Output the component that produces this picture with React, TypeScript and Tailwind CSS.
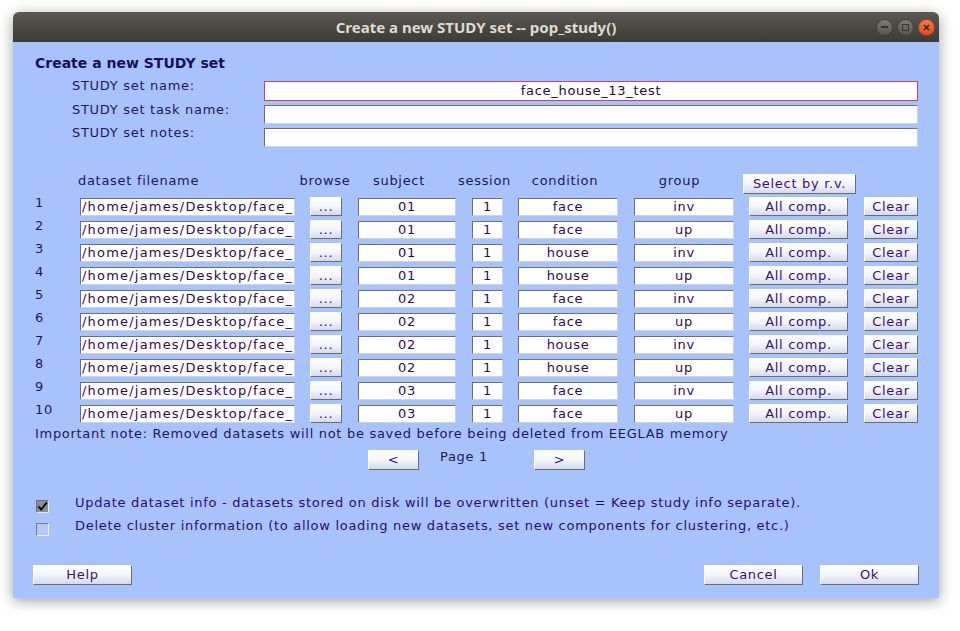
import React from 'react';

const rows = [
  { subject: '01', condition: 'face', group: 'inv' },
  { subject: '01', condition: 'face', group: 'up' },
  { subject: '01', condition: 'house', group: 'inv' },
  { subject: '01', condition: 'house', group: 'up' },
  { subject: '02', condition: 'face', group: 'inv' },
  { subject: '02', condition: 'face', group: 'up' },
  { subject: '02', condition: 'house', group: 'inv' },
  { subject: '02', condition: 'house', group: 'up' },
  { subject: '03', condition: 'face', group: 'inv' },
  { subject: '03', condition: 'face', group: 'up' },
];

// sunken text field look
const field =
  'bg-white border border-t-[#6f6f6f] border-l-[#6f6f6f] border-b-[#cdd2dc] border-r-[#cdd2dc] text-[#33094f] leading-[15px] whitespace-nowrap flex items-center';

// raised gradient button look
const btn =
  'bg-linear-to-b from-white via-[#f3f5fb] to-[#d3dae9] border border-t-white border-l-white border-b-[#6c6c74] border-r-[#6c6c74] text-[#3a0c88] flex items-center justify-center leading-[15px]';

const Button: React.FC<{ label: string; className: string }> = ({ label, className }) => (
  <div className={`${btn} ${className}`}>{label}</div>
);

const WindowButtons: React.FC = () => (
  <div className="flex items-center gap-[4px] pr-[4px]">
    <div className="w-[17px] h-[17px] rounded-full bg-linear-to-b from-[#7d7b76] to-[#57554f] border border-[#3f3e3a] flex items-center justify-center">
      <div className="w-[7px] h-[2px] bg-[#35342f]" />
    </div>
    <div className="w-[17px] h-[17px] rounded-full bg-linear-to-b from-[#7d7b76] to-[#57554f] border border-[#3f3e3a] flex items-center justify-center">
      <div className="w-[7px] h-[7px] border-[1.5px] border-[#35342f]" />
    </div>
    <div className="w-[17px] h-[17px] rounded-full bg-linear-to-b from-[#f37a4c] to-[#df4d1c] border border-[#a8401c] flex items-center justify-center">
      <svg width="7" height="7" viewBox="0 0 7 7">
        <path d="M1 1L6 6M6 1L1 6" stroke="#3a1a10" strokeWidth="1.4" />
      </svg>
    </div>
  </div>
);

export default function App() {
  return (
    <div className="w-[960px] h-[631px] bg-white pt-[12px] pl-[13px] font-['DejaVu_Sans',sans-serif] text-[13px] text-[#1f1468]">
      <div className="w-[926px] rounded-t-[6px] overflow-hidden shadow-[0_3px_14px_rgba(0,0,0,0.38)]">
        {/* title bar */}
        <div className="h-[30px] grid grid-cols-[1fr_auto_1fr] items-center bg-linear-to-b from-[#5b5852] to-[#3c3b37]">
          <div />
          <div className="font-['Noto_Sans',sans-serif] font-bold text-[15px] text-[#dfdbd2]">
            Create a new STUDY set -- pop_study()
          </div>
          <div className="flex justify-end">
            <WindowButtons />
          </div>
        </div>

        {/* content */}
        <div className="h-[556px] bg-[#a8c3fc] pl-[22px] pt-[12px] tracking-[0.7px]">
          <div className="h-[18px] leading-[18px] font-bold text-[14px] tracking-normal text-[#170e5e]">
            Create a new STUDY set
          </div>

          <div className="mt-[9px] flex flex-col">
            {[
              { label: 'STUDY set name:', value: 'face_house_13_test', focus: true },
              { label: 'STUDY set task name:', value: '', focus: false },
              { label: 'STUDY set notes:', value: '', focus: false },
            ].map((r) => (
              <div key={r.label} className="flex items-start h-[23.5px]">
                <div className="w-[229px] pl-[37px] leading-[14px] -mt-[2px] whitespace-nowrap">{r.label}</div>
                <div
                  className={
                    r.focus
                      ? 'w-[654px] h-[20px] bg-white border border-[#c2417a] text-center text-[#230a40] leading-[18px]'
                      : `w-[654px] h-[19px] ${field}`
                  }
                >
                  {r.value}
                </div>
              </div>
            ))}
          </div>

          {/* table header */}
          <div className="mt-[22px] flex items-start h-[23px] leading-[13px] whitespace-nowrap">
            <div className="w-[260px] pl-[43px]">dataset filename</div>
            <div className="w-[60px] text-center">browse</div>
            <div className="w-[88px] text-center">subject</div>
            <div className="w-[83px] text-center">session</div>
            <div className="w-[78px] text-center">condition</div>
            <div className="ml-[16px] w-[119px] text-center">group</div>
            <Button label="Select by r.v." className="ml-[4px] w-[113px] h-[20px]" />
          </div>

          {/* dataset rows */}
          {rows.map((r, i) => (
            <div key={i} className="flex items-start h-[23px]">
              <div className="w-[45px] leading-[13px] -mt-[1px]">{i + 1}</div>
              <div className={`w-[215px] h-[18px] mt-[1px] pl-[1px] tracking-[1.2px] ${field}`}>
                /home/james/Desktop/face_
              </div>
              <Button label="..." className="ml-[15px] w-[32px] h-[19px]" />
              <div className={`ml-[16px] w-[98px] h-[18px] mt-[1px] justify-center ${field}`}>{r.subject}</div>
              <div className={`ml-[16px] w-[31px] h-[18px] mt-[1px] justify-center ${field}`}>1</div>
              <div className={`ml-[15px] w-[100px] h-[18px] mt-[1px] justify-center ${field}`}>{r.condition}</div>
              <div className={`ml-[16px] w-[100px] h-[18px] mt-[1px] justify-center ${field}`}>{r.group}</div>
              <Button label="All comp." className="ml-[15px] w-[99px] h-[19px]" />
              <Button label="Clear" className="ml-[16px] w-[54px] h-[19px]" />
            </div>
          ))}

          <div className="leading-[14px] whitespace-nowrap">
            Important note: Removed datasets will not be saved before being deleted from EEGLAB memory
          </div>

          {/* paging */}
          <div className="mt-[9px] flex items-start h-[20px]">
            <Button label="<" className="ml-[333px] w-[51px] h-[20px]" />
            <div className="ml-[21px] w-[46px] leading-[13px] whitespace-nowrap">Page 1</div>
            <Button label=">" className="ml-[48px] w-[51px] h-[20px]" />
          </div>

          {/* options */}
          <div className="mt-[26px] flex flex-col">
            <div className="flex items-start h-[23px]">
              <div className="ml-[1px] mt-[4px] w-[13px] h-[13px] bg-[#8d8e99] border border-t-[#6e6e6e] border-l-[#6e6e6e] border-b-[#e4e8f2] border-r-[#e4e8f2] flex items-center justify-center">
                <svg width="11" height="11" viewBox="0 0 11 11">
                  <path d="M1.5 5.5L4.2 8.5L9.8 1.5" stroke="#000" strokeWidth="2" fill="none" />
                </svg>
              </div>
              <div className="ml-[26px] leading-[14px] text-[#2c0a78] whitespace-nowrap">
                Update dataset info - datasets stored on disk will be overwritten (unset = Keep study info separate).
              </div>
            </div>
            <div className="flex items-start h-[23px]">
              <div className="ml-[1px] mt-[4px] w-[13px] h-[13px] bg-[#b4c8f2] border border-t-[#7a7a7a] border-l-[#7a7a7a] border-b-[#eef2fb] border-r-[#eef2fb]" />
              <div className="ml-[26px] leading-[14px] text-[#2c0a78] whitespace-nowrap">
                Delete cluster information (to allow loading new datasets, set new components for clustering, etc.)
              </div>
            </div>
          </div>

          {/* bottom buttons */}
          <div className="mt-[23px] flex items-start h-[20px]">
            <Button label="Help" className="-ml-[2px] w-[99px] h-[20px]" />
            <Button label="Cancel" className="ml-[572px] w-[99px] h-[20px]" />
            <Button label="Ok" className="ml-[17px] w-[99px] h-[20px]" />
          </div>
        </div>
      </div>
    </div>
  );
}
